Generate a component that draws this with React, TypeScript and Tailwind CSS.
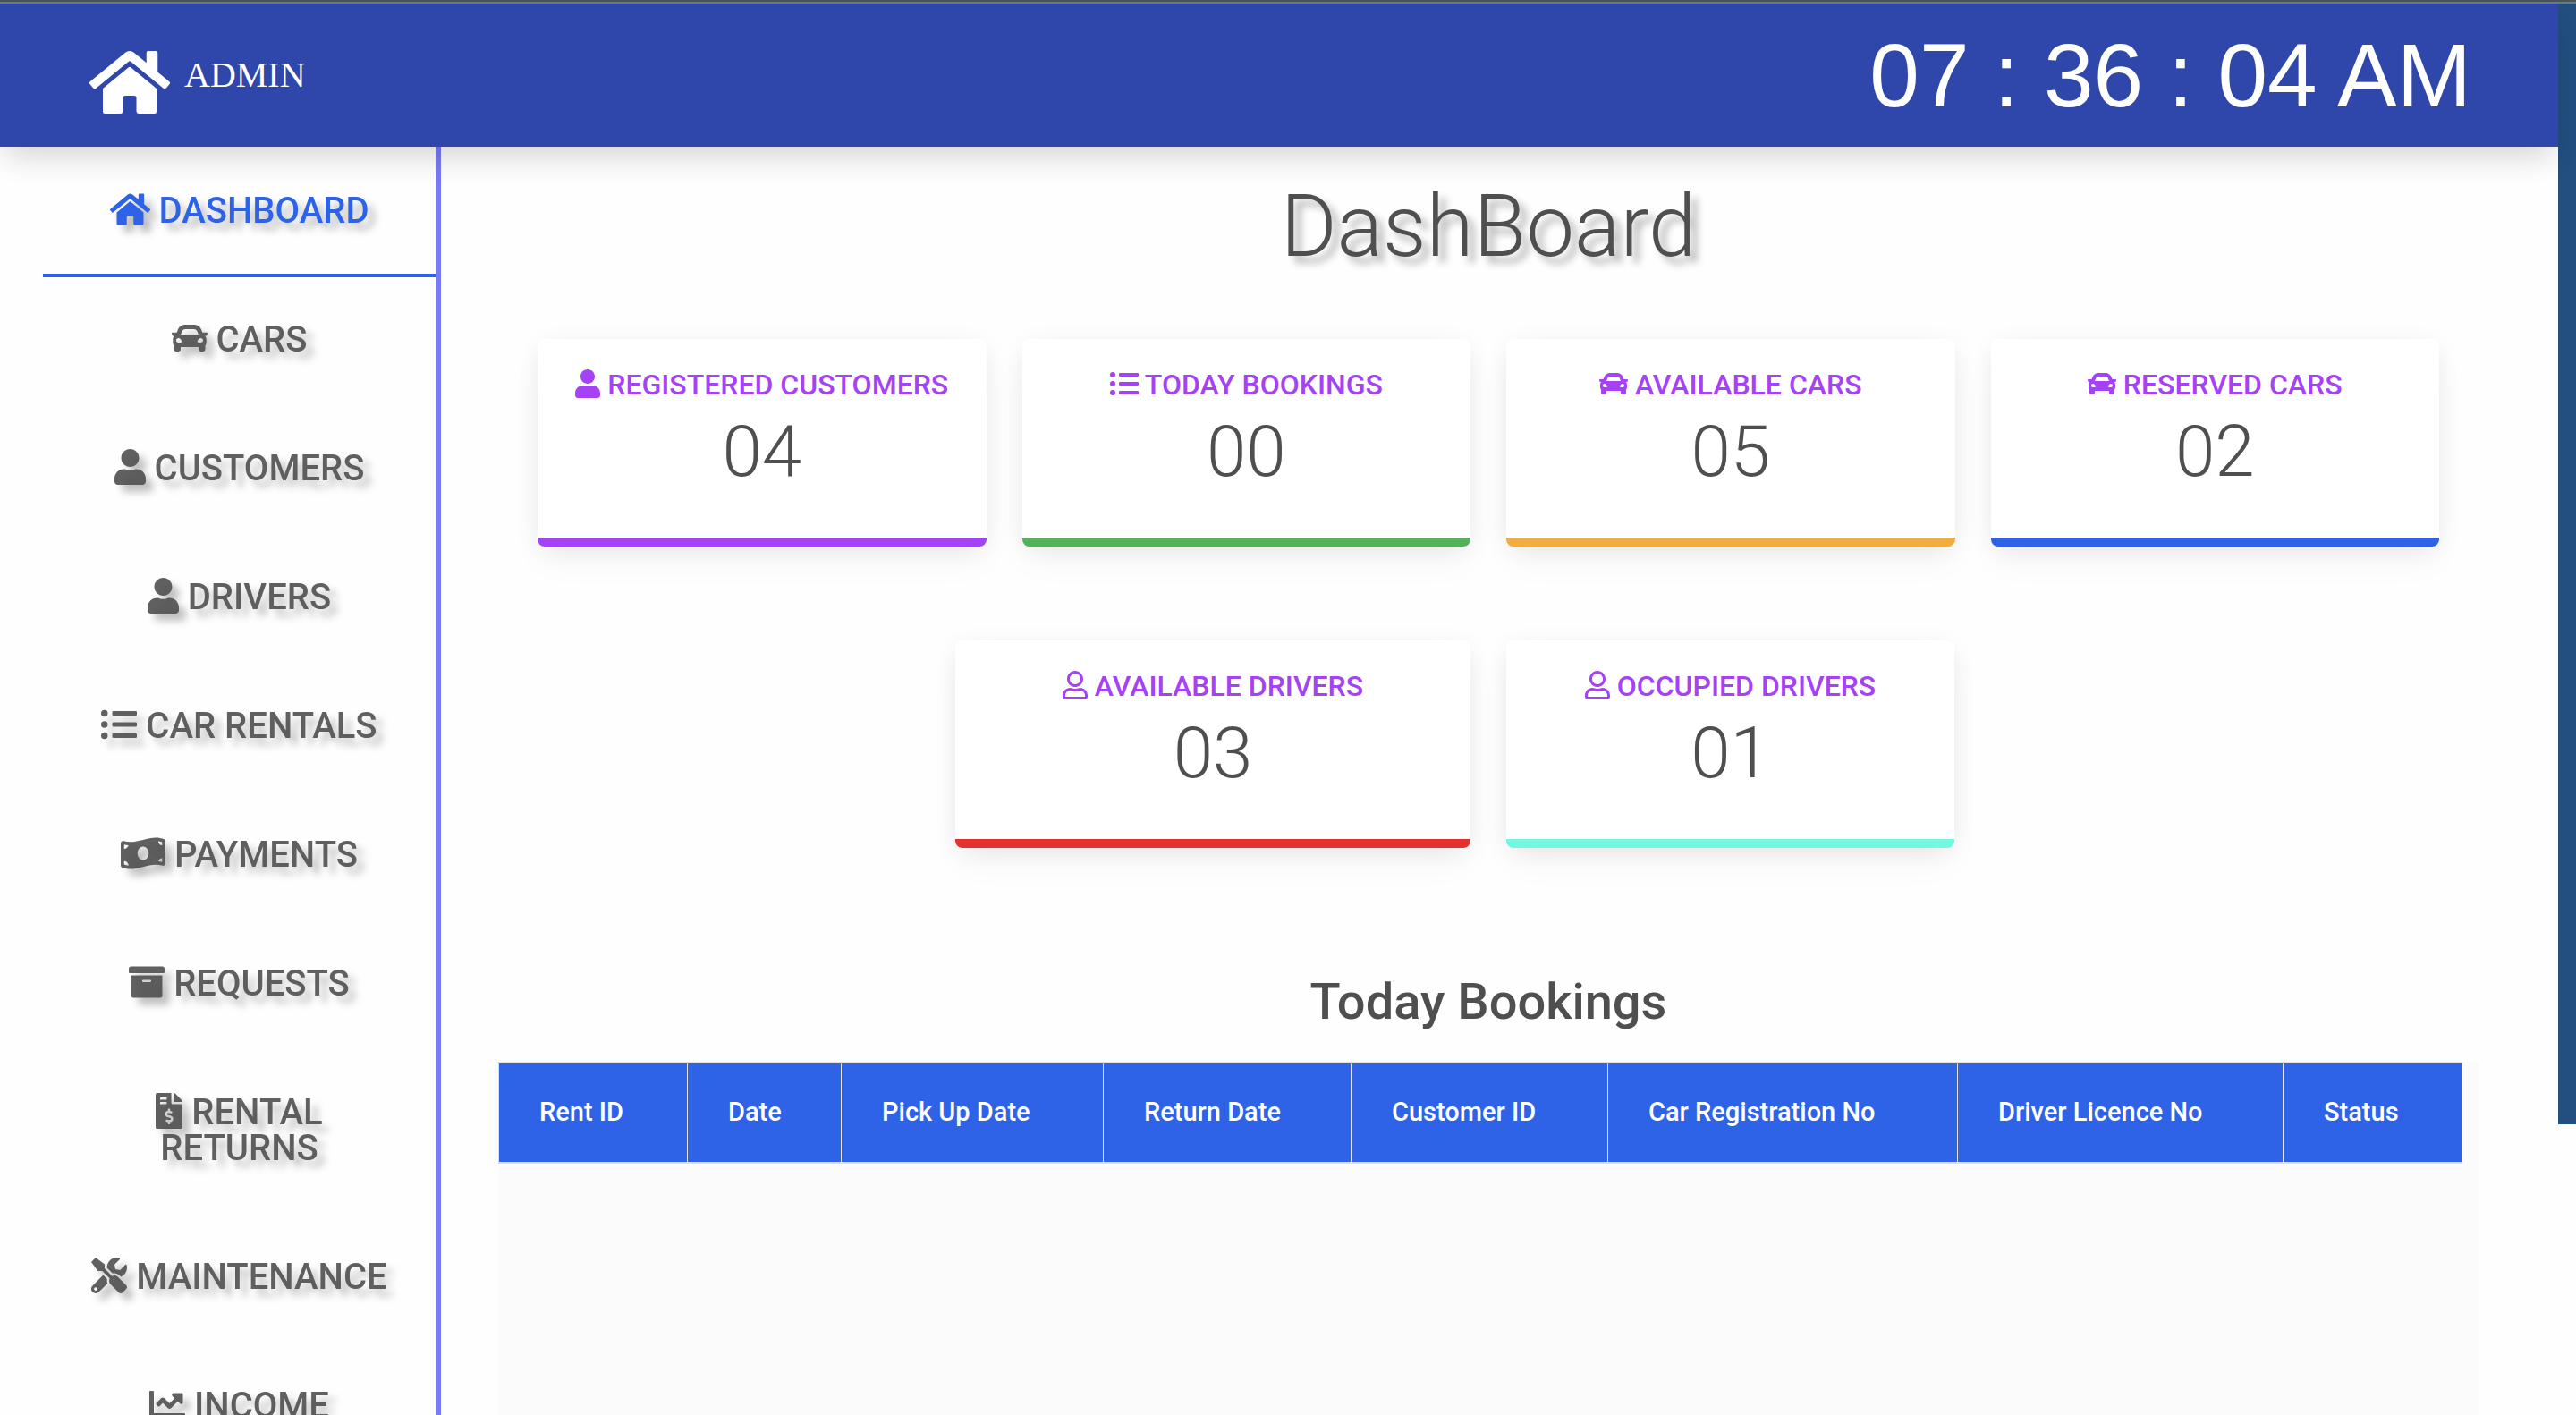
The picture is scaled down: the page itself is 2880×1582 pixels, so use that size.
import type { IconType } from "react-icons";
import {
  FaArchive,
  FaCar,
  FaChartLine,
  FaFileInvoiceDollar,
  FaHome,
  FaListUl,
  FaMoneyBillWave,
  FaRegUser,
  FaTools,
  FaUser,
} from "react-icons/fa";

type NavItem = { label: string; icon: IconType; active?: boolean };

const navItems: NavItem[] = [
  { label: "DASHBOARD", icon: FaHome, active: true },
  { label: "CARS", icon: FaCar },
  { label: "CUSTOMERS", icon: FaUser },
  { label: "DRIVERS", icon: FaUser },
  { label: "CAR RENTALS", icon: FaListUl },
  { label: "PAYMENTS", icon: FaMoneyBillWave },
  { label: "REQUESTS", icon: FaArchive },
  { label: "RENTAL RETURNS", icon: FaFileInvoiceDollar },
  { label: "MAINTENANCE", icon: FaTools },
  { label: "INCOME", icon: FaChartLine },
];

type Stat = { label: string; value: string; icon: IconType; border: string };

const bookingStats: Stat[] = [
  { label: "REGISTERED CUSTOMERS", value: "04", icon: FaUser, border: "border-[#a542f5]" },
  { label: "TODAY BOOKINGS", value: "00", icon: FaListUl, border: "border-[#53b25a]" },
  { label: "AVAILABLE CARS", value: "05", icon: FaCar, border: "border-[#f2ad3f]" },
  { label: "RESERVED CARS", value: "02", icon: FaCar, border: "border-[#2e63e8]" },
];

const driverStats: Stat[] = [
  { label: "AVAILABLE DRIVERS", value: "03", icon: FaRegUser, border: "border-[#e4302f] col-start-2" },
  { label: "OCCUPIED DRIVERS", value: "01", icon: FaRegUser, border: "border-[#72f7e0]" },
];

const columns = [
  { label: "Rent ID", width: "w-[211px]" },
  { label: "Date", width: "w-[172px]" },
  { label: "Pick Up Date", width: "w-[293px]" },
  { label: "Return Date", width: "w-[277px]" },
  { label: "Customer ID", width: "w-[287px]" },
  { label: "Car Registration No", width: "w-[391px]" },
  { label: "Driver Licence No", width: "w-[364px]" },
  { label: "Status", width: "w-[200px]" },
];

// Font Awesome glyphs differ in width; these keep each one's own proportions.
const glyphWidths = new Map<IconType, string>([
  [FaHome, "w-[1.125em]"],
  [FaUser, "w-[0.875em]"],
  [FaRegUser, "w-[0.875em]"],
  [FaMoneyBillWave, "w-[1.25em]"],
  [FaFileInvoiceDollar, "w-[0.75em]"],
]);

function Glyph({ icon: Icon }: { icon: IconType }) {
  return (
    <Icon
      aria-hidden
      className={`inline-block h-[1em] align-[-0.125em] ${glyphWidths.get(Icon) ?? "w-[1em]"}`}
    />
  );
}

function StatCard({ stat }: { stat: Stat }) {
  return (
    <section
      className={`rounded-lg border-b-[10px] bg-white pt-8 pb-12 text-center shadow-[0_4px_30px_-6px_rgba(0,0,0,0.1),0_20px_40px_-4px_rgba(0,0,0,0.04)] ${stat.border}`}
    >
      <h2 className="text-[32px] leading-[38px] font-medium whitespace-nowrap text-[#a542f5]">
        <Glyph icon={stat.icon} /> {stat.label}
      </h2>
      <p className="mt-2 text-[80px] leading-[96px] font-light">{stat.value}</p>
    </section>
  );
}

export default function App() {
  return (
    <div className="flex h-screen flex-col overflow-hidden bg-[#fefefe] font-['Roboto',sans-serif] text-[#4f4f4f]">
      <div className="h-1 shrink-0 border-b-2 border-[#6f7b80] bg-[#48565c]" />
      <div className="flex min-h-0 flex-1">
        <div className="flex min-w-0 flex-1 flex-col">
          <header className="relative z-10 flex h-40 shrink-0 items-center justify-between bg-[#2f46ab] pr-[97px] pl-[100px] text-white shadow-[0_20px_30px_-6px_rgba(0,0,0,0.11),0_8px_40px_-4px_rgba(0,0,0,0.06)]">
            <a href="#home" className="flex items-center gap-4 font-['Liberation_Serif',serif] text-[40px] leading-10">
              <FaHome aria-hidden className="mt-4 h-20 w-[90px]" />
              ADMIN
            </a>
            <time className="font-['Liberation_Sans',sans-serif] text-[100px] leading-[112px]">
              07 : 36 : 04 AM
            </time>
          </header>

          <div className="flex min-h-0 flex-1">
            <nav
              aria-label="Admin sections"
              className="ml-12 w-[445px] shrink-0 overflow-hidden border-r-[6px] border-[#787bf8] pt-0.5"
            >
              {navItems.map(({ label, icon, active }) => (
                <a
                  key={label}
                  href={`#${label.toLowerCase().replace(" ", "-")}`}
                  aria-current={active ? "page" : undefined}
                  className={`block border-b-4 px-12 pt-12 pb-[50px] text-center text-[40px] leading-10 font-medium ${
                    active ? "border-[#2e63e8] text-[#2e63e8]" : "border-transparent text-[#4f4f4f]/90"
                  }`}
                >
                  <span className="block drop-shadow-[8px_8px_4px_rgba(0,0,0,0.27)]">
                    <Glyph icon={icon} /> {label}
                  </span>
                </a>
              ))}
            </nav>

            <main className="flex min-w-0 flex-1 flex-col pt-8 pr-[89px] pl-16">
              <h1 className="text-center text-[96px] leading-[115px] font-light [text-shadow:8px_8px_8px_rgba(0,0,0,0.3)]">
                DashBoard
              </h1>

              <div className="mt-[68px] grid grid-cols-4 gap-10 px-11">
                {bookingStats.map((stat) => (
                  <StatCard key={stat.label} stat={stat} />
                ))}
              </div>
              <div className="mt-[105px] grid grid-cols-[427fr_576fr_501fr_502fr] gap-10 px-11">
                {driverStats.map((stat) => (
                  <StatCard key={stat.label} stat={stat} />
                ))}
              </div>

              <h2 id="bookings-title" className="mt-[139px] mb-[33px] text-center text-[56px] leading-[67px] font-medium">
                Today Bookings
              </h2>
              <div className="min-h-0 flex-1 bg-[#fbfbfb] pr-5">
                <table
                  aria-labelledby="bookings-title"
                  className="w-full table-fixed border-separate border-spacing-0 border-r border-[#e0e0e0]"
                >
                  <thead>
                    <tr>
                      {columns.map(({ label, width }) => (
                        <th
                          key={label}
                          scope="col"
                          className={`h-[114px] border-y-2 border-l border-[#e0e0e0] bg-[#2e63e8] pl-[45px] text-left text-[29px] font-medium whitespace-nowrap text-white ${width}`}
                        >
                          {label}
                        </th>
                      ))}
                    </tr>
                  </thead>
                </table>
              </div>
            </main>
          </div>
        </div>
        <div className="h-[1253px] w-5 shrink-0 bg-[#224f7f]" />
      </div>
    </div>
  );
}
